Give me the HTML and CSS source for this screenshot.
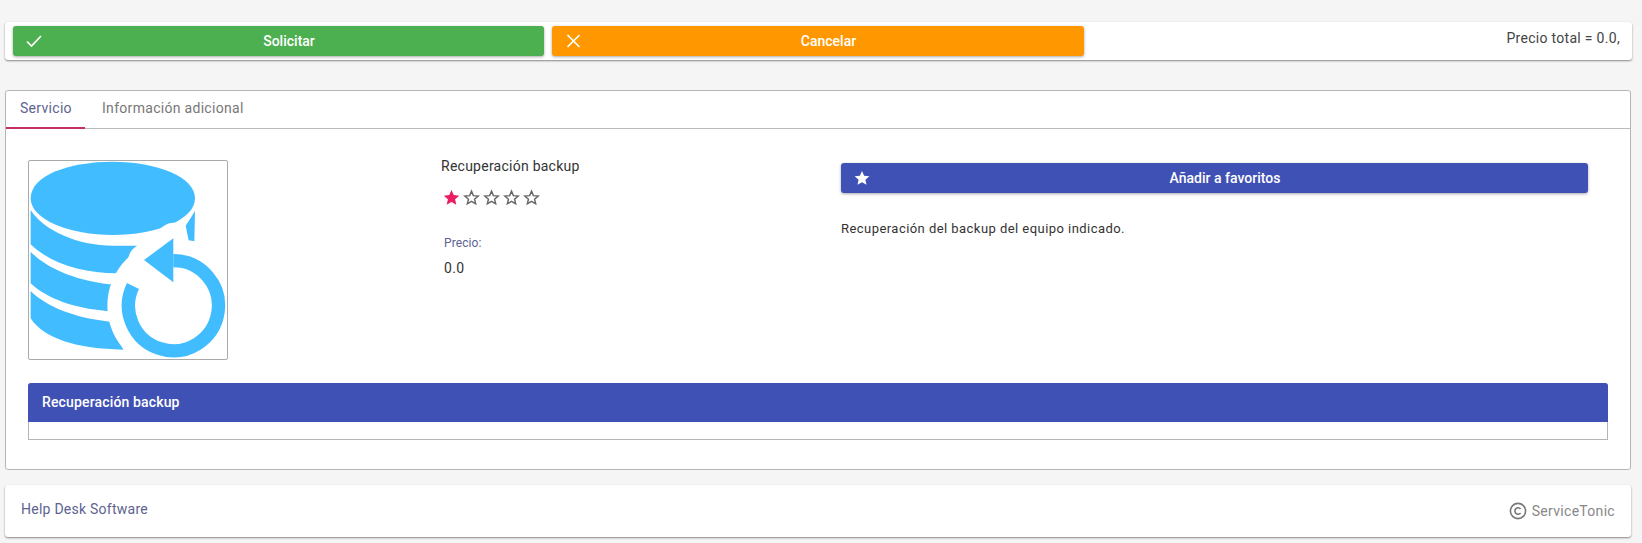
FILE: index.html
```html
<!DOCTYPE html>
<html lang="es">
<head>
<meta charset="utf-8">
<title>Recuperación backup</title>
<link rel="stylesheet" href="styles.css">
</head>
<body>
<div class="page">
  <div class="toolbar">
    <button class="btn btn-green btn-action">
      <svg class="btn-icon" viewBox="0 0 16 16"><path d="M1 8.500 L5.500 13 L15 3" fill="none" stroke="#fff" stroke-width="1.700"/></svg>
      <span class="btn-label">Solicitar</span>
    </button>
    <button class="btn btn-orange btn-action btn-wide">
      <svg class="btn-icon" viewBox="0 0 16 16"><path d="M2.500 2 L14.500 14 M14.500 2 L2.500 14" fill="none" stroke="#fff" stroke-width="1.700"/></svg>
      <span class="btn-label">Cancelar</span>
    </button>
    <div class="total">Precio total = 0.0,</div>
  </div>

  <div class="panel">
    <div class="tabs">
      <div class="tab tab-active">Servicio</div>
      <div class="tab">Información adicional</div>
    </div>
    <div class="content">
      <div class="detail">
        <div class="image-col">
          <div class="image-box">
            <svg class="db-icon" viewBox="27 18 594 594">
              <g fill="#40bcff">
                <path d="M32 130 C32 60 150 20 278 20 C410 20 525 65 525 130 C525 195 410 240 278 240 C150 240 32 195 32 130 Z"/>
                <path d="M32 165 C70 225 170 272 280 272 L400 272 L400 355 L290 355 C190 355 90 325 32 268 Z"/>
                <path d="M32 290 C80 340 170 380 290 390 L290 470 L260 468 C160 460 80 430 32 385 Z"/>
                <path d="M32 408 C80 455 160 488 270 500 L310 584 C170 582 70 550 32 490 Z"/>
              </g>
              <circle cx="460" cy="452" r="198" fill="#fff"/>
              <path class="halo" d="M372 315 L460 250 L460 382 Z"/>
              <g fill="#40bcff">
                <path d="M525 168 C515 185 505 200 497 212 L506 256 L523 259 Z"/>
                <path d="M372 315 L460 250 L460 382 Z"/>
              </g>
              <path d="M460 317 A135 135 0 1 1 339 393" fill="none" stroke="#40bcff" stroke-width="40"/>
            </svg>
          </div>
        </div>
        <div class="info-col">
          <div class="service-name">Recuperación backup</div>
          <div class="stars">
            <svg class="star" viewBox="0 0 24 24"><path class="star-on" d="M12 1.500 L15.200 8.600 L23 9.400 L17.100 14.600 L18.800 22.300 L12 18.300 L5.200 22.300 L6.900 14.600 L1 9.400 L8.800 8.600 Z"/></svg>
            <svg class="star" viewBox="0 0 24 24"><path class="star-off" d="M12 3 L14.600 9.300 L21.500 9.900 L16.300 14.400 L17.900 21 L12 17.500 L6.100 21 L7.700 14.400 L2.500 9.900 L9.400 9.300 Z"/></svg>
            <svg class="star" viewBox="0 0 24 24"><path class="star-off" d="M12 3 L14.600 9.300 L21.500 9.900 L16.300 14.400 L17.900 21 L12 17.500 L6.100 21 L7.700 14.400 L2.500 9.900 L9.400 9.300 Z"/></svg>
            <svg class="star" viewBox="0 0 24 24"><path class="star-off" d="M12 3 L14.600 9.300 L21.500 9.900 L16.300 14.400 L17.900 21 L12 17.500 L6.100 21 L7.700 14.400 L2.500 9.900 L9.400 9.300 Z"/></svg>
            <svg class="star" viewBox="0 0 24 24"><path class="star-off" d="M12 3 L14.600 9.300 L21.500 9.900 L16.300 14.400 L17.900 21 L12 17.500 L6.100 21 L7.700 14.400 L2.500 9.900 L9.400 9.300 Z"/></svg>
          </div>
          <div class="price-label">Precio:</div>
          <div class="price-value">0.0</div>
        </div>
        <div class="fav-col">
          <button class="btn btn-indigo btn-fav">
            <svg class="btn-icon" viewBox="0 0 24 24"><path d="M12 1.500 L15.200 8.600 L23 9.400 L17.100 14.600 L18.800 22.300 L12 18.300 L5.200 22.300 L6.900 14.600 L1 9.400 L8.800 8.600 Z" fill="#fff"/></svg>
            <span class="btn-label">Añadir a favoritos</span>
          </button>
          <p class="description">Recuperación del backup del equipo indicado.</p>
        </div>
      </div>
      <div class="section">
        <div class="section-head">Recuperación backup</div>
        <div class="section-body"></div>
      </div>
    </div>
  </div>

  <div class="footer">
    <div class="footer-link">Help Desk Software</div>
    <div class="brand">
      <svg class="brand-icon" viewBox="0 0 18 18"><circle cx="9" cy="9" r="7.600" fill="none" stroke="#777" stroke-width="1.600"/><path d="M11.600 7 A3.200 3.200 0 1 0 11.600 11" fill="none" stroke="#777" stroke-width="1.600"/></svg>
      <span>ServiceTonic</span>
    </div>
  </div>
</div>
</body>
</html>
```
FILE: styles.css
```css
* { box-sizing: border-box; }
html, body { margin: 0; padding: 0; }
body {
  background: #f5f5f5;
  font-family: Roboto, "Liberation Sans", sans-serif;
  font-size: 14px;
  color: #333;
}
.page { padding: 22px 10px 7px 5px; }

.toolbar {
  display: flex;
  gap: 8px;
  height: 38px;
  padding: 4px 12px 0 8px;
  background: #fff;
  border-radius: 3px;
  box-shadow: 0 1px 2px rgba(0, 0, 0, .45);
}
.total {
  margin-left: auto;
  padding-top: 3px;
  font-size: 14px;
  line-height: 18px;
  letter-spacing: .3px;
  color: #444;
}

.btn {
  display: flex;
  align-items: center;
  height: 30px;
  padding: 0 8px 0 13px;
  border: 0;
  border-radius: 3px;
  font-family: inherit;
  font-size: 14px;
  font-weight: 500;
  color: #fff;
  box-shadow: 0 1px 3px rgba(0, 0, 0, .35);
}
.btn-action { width: 531px; }
.btn-wide { width: 532px; }
.btn-green { background: #4caf50; }
.btn-orange { background: #ff9800; }
.btn-indigo { background: #3f51b5; width: 747px; }
.btn-icon { width: 16px; height: 16px; flex: none; }
.btn-label { flex: 1; padding-bottom: 1px; text-align: center; }

.panel {
  margin: 30px 1px 0 0;
  background: #fff;
  border: 1px solid #b5b5b5;
  border-radius: 3px;
}
.tabs {
  display: flex;
  height: 38px;
  border-bottom: 1px solid #bbb;
}
.tab {
  padding: 0 16px 0 14px;
  height: 38px;
  line-height: 35px;
  font-size: 14px;
  letter-spacing: .3px;
  color: #777;
}
.tab-active {
  width: 79px;
  color: #5c6390;
  border-bottom: 2px solid #c4305f;
  margin-right: 3px;
}
.content { padding: 31px 22px 29px; }
.detail {
  display: grid;
  grid-template-columns: 412px 401px 747px;
}
.image-box {
  width: 200px;
  height: 200px;
  border: 1px solid #aaa;
  border-radius: 2px;
  background: #fff;
}
.db-icon { display: block; width: 198px; height: 198px; }
.halo { fill: #fff; stroke: #fff; stroke-width: 94; stroke-linejoin: round; }

.service-name {
  margin-top: -3px;
  padding-left: 1px;
  line-height: 18px;
  letter-spacing: .25px;
  color: #333;
}
.stars {
  display: flex;
  gap: 3px;
  margin: 14px 0 0 3px;
  height: 17px;
}
.star { width: 17px; height: 17px; flex: none; }
.star-on { fill: #e91e63; }
.star-off { fill: none; stroke: #666; stroke-width: 2; }
.price-label {
  margin: 30px 0 0 4px;
  font-size: 12px;
  line-height: 14px;
  letter-spacing: .1px;
  color: #5c6390;
}
.price-value {
  margin: 9px 0 0 4px;
  line-height: 18px;
  letter-spacing: .3px;
  color: #333;
}

.fav-col { padding-top: 3px; }
.description {
  margin: 27px 0 0;
  font-size: 13px;
  line-height: 18px;
  letter-spacing: .45px;
  color: #333;
}

.section {
  margin-top: 23px;
  height: 57px;
  border: 1px solid #b5b5b5;
  border-top: 0;
  border-radius: 3px 3px 0 0;
}
.section-head {
  height: 39px;
  margin: 0 -1px;
  padding-left: 14px;
  line-height: 38px;
  font-size: 14px;
  font-weight: 500;
  letter-spacing: .15px;
  color: #fff;
  background: #3f51b5;
  border-radius: 3px 3px 0 0;
}
.section-body { height: 17px; }

.footer {
  display: flex;
  align-items: center;
  justify-content: space-between;
  height: 52px;
  margin: 15px 1px 0 0;
  padding: 0 16px;
  background: #fff;
  border-radius: 3px;
  box-shadow: 0 1px 2px rgba(0, 0, 0, .45);
}
.footer-link {
  letter-spacing: .25px;
  color: #5c6390;
  margin-top: -4px;
}
.brand {
  display: flex;
  align-items: center;
  gap: 5px;
  letter-spacing: .3px;
  color: #888;
}
.brand-icon { width: 18px; height: 18px; flex: none; }
```
